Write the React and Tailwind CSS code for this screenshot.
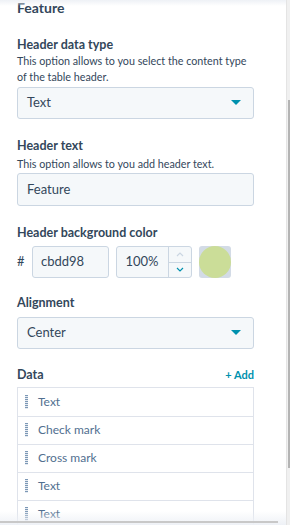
import React from 'react';

const font = { fontFamily: 'Lato, "Noto Sans", sans-serif' };

const Caret = () => (
  <svg width="10" height="6" viewBox="0 0 10 6" className="shrink-0">
    <path d="M0 0 L10 0 L5 5 Z" fill="#0091ae" />
  </svg>
);

const Grip = () => (
  <svg width="3" height="14" viewBox="0 0 3 14" className="shrink-0">
    {[0, 2, 4, 6, 8, 10, 12].map((y) => (
      <rect key={y} x="0" y={y} width="3" height="1.2" fill="#7c98b6" />
    ))}
  </svg>
);

const Label = ({ children }) => (
  <div className="text-[12.5px] font-bold text-[#33475b] leading-4">{children}</div>
);

const Help = ({ lines }) => (
  <div className="text-[10.75px] text-[#33475b] leading-4 whitespace-nowrap">
    {lines.map((l, i) => (
      <div key={i}>{l}</div>
    ))}
  </div>
);

const Select = ({ value }) => (
  <div className="flex items-center justify-between h-[32px] border border-[#cbd6e2] bg-[#f5f8fa] rounded-[3px] pl-[9px] pr-[12px] text-[13px] text-[#33475b]">
    <span>{value}</span>
    <Caret />
  </div>
);

const App = () => {
  const rows = ['Text', 'Check mark', 'Cross mark', 'Text', 'Text'];
  return (
    <div className="flex w-[290px] h-[525px] bg-white overflow-hidden" style={font}>
      <div className="relative w-[286px] h-[525px] overflow-hidden">
        <div className="absolute top-0 left-0 right-0 h-[6px] bg-gradient-to-b from-[#eef1f6] to-transparent" />
        <div className="pl-[17px] pr-[32px]">
          <div className="text-[14px] font-bold text-[#33475b] leading-4">Feature</div>

          <div className="mt-[21px]">
            <Label>Header data type</Label>
            <Help lines={['This option allows to you select the content type', 'of the table header.']} />
            <div className="mt-[2px]">
              <Select value="Text" />
            </div>
          </div>

          <div className="mt-[19px]">
            <Label>Header text</Label>
            <div className="mt-[2px]">
              <Help lines={['This option allows to you add header text.']} />
            </div>
            <div className="mt-[1px] flex items-center h-[33px] border border-[#cbd6e2] bg-[#f5f8fa] rounded-[3px] pl-[9px] text-[13px] text-[#33475b]">
              Feature
            </div>
          </div>

          <div className="mt-[19px]">
            <Label>Header background color</Label>
            <div className="mt-[5px] flex items-center h-[32px]">
              <span className="w-[15px] text-[13px] text-[#33475b]">#</span>
              <div className="flex items-center w-[77px] h-[32px] border border-[#cbd6e2] bg-[#f5f8fa] rounded-[3px] pl-[8px] text-[13px] text-[#33475b]">
                cbdd98
              </div>
              <div className="ml-[7px] flex w-[76px] h-[32px] border border-[#cbd6e2] bg-[#f5f8fa] rounded-[3px] text-[13px] text-[#33475b]">
                <div className="flex-1 flex items-center justify-center pr-[1px]">100%</div>
                <div className="w-[23px] flex flex-col border-l border-[#cbd6e2]">
                  <div className="flex-1 flex items-center justify-center border-b border-[#cbd6e2]">
                    <svg width="8" height="5" viewBox="0 0 8 5">
                      <path d="M1 4 L4 1 L7 4" fill="none" stroke="#cbd6e2" strokeWidth="1.2" />
                    </svg>
                  </div>
                  <div className="flex-1 flex items-center justify-center">
                    <svg width="8" height="5" viewBox="0 0 8 5">
                      <path d="M1 1 L4 4 L7 1" fill="none" stroke="#0091ae" strokeWidth="1.2" />
                    </svg>
                  </div>
                </div>
              </div>
              <div className="ml-[7px] w-[32px] h-[32px] bg-[#d3dbe6] rounded-[3px]">
                <div className="w-[32px] h-[32px] rounded-full bg-[#cbdd98]" />
              </div>
            </div>
          </div>

          <div className="mt-[17px]">
            <Label>Alignment</Label>
            <div className="mt-[6px]">
              <Select value="Center" />
            </div>
          </div>

          <div className="mt-[18px]">
            <div className="flex items-center justify-between">
              <Label>Data</Label>
              <span className="text-[11px] font-bold text-[#0091ae]">+ Add</span>
            </div>
            <div className="mt-[3px] border border-[#dfe3eb]">
              {rows.map((r, i) => (
                <div
                  key={i}
                  className={`flex items-center h-[28px] pl-[7px] gap-[10px] text-[12px] text-[#516f90] ${i > 0 ? 'border-t border-[#dfe3eb]' : ''}`}
                >
                  <Grip />
                  <span>{r}</span>
                </div>
              ))}
            </div>
          </div>
        </div>
        <div className="absolute bottom-0 left-0 right-0 h-[14px] bg-gradient-to-b from-transparent to-[#eef1f6]" />
        <div className="absolute bottom-[2px] left-0 w-[278px] h-[2px] bg-[#c8c8c8]" />
      </div>
      <div className="w-[4px] h-[525px] bg-[#f0f0f0] border-l border-[#e4e4e4] relative">
        <div className="absolute right-0 top-[100px] w-[2px] h-[368px] bg-[#b4b4b4]" />
      </div>
    </div>
  );
};

export default App;
